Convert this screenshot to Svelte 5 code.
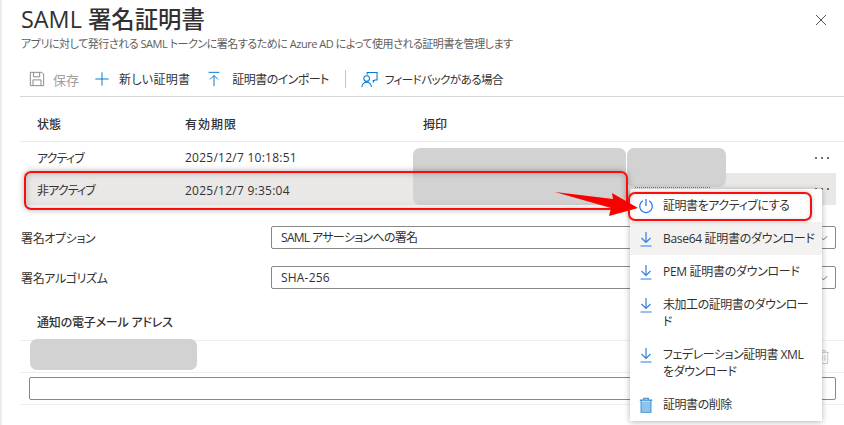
<script>
  const rows = [
    { state: 'アクティブ', date: '2025/12/7 10:18:51', selected: false },
    { state: '非アクティブ', date: '2025/12/7 9:35:04', selected: true }
  ];
  const fields = [
    { label: '署名オプション', value: 'SAML アサーションへの署名', cls: 'tight' },
    { label: '署名アルゴリズム', value: 'SHA-256', cls: '' }
  ];
  const downloads = [
    { text: 'Base64 証明書のダウンロード', cls: 'single hover' },
    { text: 'PEM 証明書のダウンロード', cls: 'single' },
    { text: '未加工の証明書のダウンロー\nド', cls: 'double' },
    { text: 'フェデレーション証明書 XML\nをダウンロード', cls: 'double' }
  ];
</script>

<div class="page">
  <header class="head">
    <h1>SAML 署名証明書</h1>
    <p>アプリに対して発行される SAML トークンに署名するために Azure AD によって使用される証明書を管理します</p>
    <svg class="close" viewBox="0 0 12 12"><path d="M1 1l10 10M11 1L1 11" /></svg>
  </header>

  <nav class="toolbar">
    <span class="tool disabled t-save">
      <svg viewBox="0 0 18 18" class="ic"><path d="M1.500 1.500h13l2 2v13h-15z M5 1.500v5h7v-5 M4.500 16.500v-6.500h9v6.500" /></svg>
      保存
    </span>
    <span class="tool t-new">
      <svg viewBox="0 0 18 18" class="ic blue"><path d="M9 1.500v15M1.500 9h15" /></svg>
      新しい証明書
    </span>
    <span class="tool t-import">
      <svg viewBox="0 0 18 18" class="ic blue"><path d="M3 1.500h12M9 17V5M4.500 9.500L9 5l4.500 4.500" /></svg>
      証明書のインポート
    </span>
    <span class="sep"></span>
    <span class="tool t-feedback">
      <svg viewBox="0 0 18 18" class="ic blue"><path d="M6.500 4V1.500H17v8h-2.500l-1.500 2v-2" /><circle cx="6" cy="8" r="3" /><path d="M1 17c0-3 2-5 5-5s5 2 5 5" /></svg>
      フィードバックがある場合
    </span>
  </nav>

  <section class="certs">
    <div class="row headrow">
      <span class="c1">状態</span><span class="c2">有効期限</span><span>拇印</span>
    </div>
    {#each rows as r}
      <div class="row" class:selected={r.selected}>
        <span class="c1">{r.state}</span><span class="c2">{r.date}</span>
        <svg class="more" viewBox="0 0 16 4"><circle cx="2" cy="2" r="1.100" /><circle cx="8" cy="2" r="1.100" /><circle cx="14" cy="2" r="1.100" /></svg>
      </div>
    {/each}
  </section>

  <section class="form">
    {#each fields as f}
      <div class="field">
        <span class="label">{f.label}</span>
        <div class="select">
          <span class={f.cls}>{f.value}</span>
          <svg viewBox="0 0 10 6" class="chev"><path d="M1 1l4 4 4-4" /></svg>
        </div>
      </div>
    {/each}
  </section>

  <section class="emails">
    <div class="emailhead">通知の電子メール アドレス</div>
    <div class="emailrow">
      <svg viewBox="0 0 14 16" class="trash"><path d="M1 3h12M5 3V1h4v2M2.500 3v12h9V3M5.500 6v6M8.500 6v6" /></svg>
    </div>
    <div class="emailinput"><div class="textbox"></div></div>
  </section>

  <div class="dots"></div>
  <div class="blur b1"></div>
  <div class="blur b2"></div>
  <div class="blur b3"></div>

  <div class="menu">
    <div class="item first">
      <svg viewBox="0 0 16 16" class="mi power"><path d="M8 1v7" /><path d="M4.800 2.800a6.300 6.300 0 1 0 6.400 0" /></svg>
      <span>証明書をアクティブにする</span>
    </div>
    {#each downloads as d}
      <div class="item {d.cls}">
        <svg viewBox="0 0 16 16" class="mi"><path d="M8 1v10M3.500 7L8 11.500 12.500 7M2.500 15h11" /></svg>
        <span>{d.text}</span>
      </div>
    {/each}
    <div class="item last">
      <svg viewBox="0 0 16 18" class="mi trashicon"><path class="fill" d="M3 5h10v11H3z" /><path d="M2.500 4v13h11V4M1 3.500h14M5.500 3V1.500h5V3" /></svg>
      <span>証明書の削除</span>
    </div>
  </div>

  <div class="mark markrow"></div>
  <div class="mark markitem"></div>
  <svg class="arrow" viewBox="555 190 85 28"><path d="M555 192L613 199 612 193 638 208 609 216 611 208z" /></svg>
</div>

<style>
  :global(body) {
    margin: 0;
    background: #fff;
  }
  .page {
    position: relative;
    width: 844px;
    height: 425px;
    overflow: hidden;
    box-sizing: border-box;
    border-left: 2px solid #ebebeb;
    font-family: "Open Sans", "Noto Sans CJK JP", sans-serif;
    font-feature-settings: "palt";
    font-size: 12px;
    color: #323130;
  }
  .head {
    position: relative;
    height: 52px;
    padding-left: 19px;
    box-sizing: border-box;
  }
  h1 {
    margin: 0;
    padding-top: 3px;
    font-size: 23.400px;
    line-height: 32px;
    font-weight: 500;
  }
  .head p {
    margin: 0;
    padding-top: 1px;
    font-size: 11px;
    line-height: 16px;
    color: #605e5c;
    white-space: nowrap;
    letter-spacing: -0.470px;
  }
  .close {
    position: absolute;
    right: 17px;
    top: 14px;
    width: 12px;
    height: 12px;
    fill: none;
    stroke: #505050;
    stroke-width: 1;
  }
  .toolbar {
    display: flex;
    align-items: center;
    margin: 0 0 0 18px;
    padding: 10px 0 0 9px;
    height: 34px;
    border-bottom: 1px solid #d6d6d6;
    gap: 16px;
    font-size: 12px;
  }
  .tool {
    display: flex;
    align-items: center;
    gap: 8px;
    white-space: nowrap;
  }
  .disabled {
    color: #a19f9d;
  }
  .t-save {
    font-size: 13px;
    margin-right: -1px;
  }
  .t-new {
    gap: 9px;
    letter-spacing: 0.300px;
  }
  .t-import {
    gap: 10px;
    letter-spacing: -0.550px;
  }
  .t-feedback {
    font-size: 11.500px;
    letter-spacing: -0.550px;
    margin-left: -1px;
    gap: 7px;
  }
  .t-feedback .ic {
    width: 17px;
    height: 17px;
  }
  .ic {
    width: 16px;
    height: 16px;
    fill: none;
    stroke: #8a8886;
    stroke-width: 1.100;
    flex: none;
  }
  .ic.blue {
    stroke: #0078d4;
  }
  .sep {
    width: 1px;
    height: 18px;
    background: #c8c6c4;
  }
  .certs {
    margin: 0 0 0 18px;
  }
  .row {
    display: flex;
    align-items: center;
    height: 31px;
    padding-left: 17px;
    margin-right: 8px;
    position: relative;
  }
  .headrow {
    height: 45px;
    padding-top: 10px;
    border-bottom: 1px solid #eaeaea;
    font-weight: 500;
    box-sizing: border-box;
    margin-right: 0;
  }
  .selected {
    background: #eae8e6;
    margin-left: 4px;
    padding-left: 13px;
    padding-top: 2px;
    box-sizing: border-box;
    height: 32px;
  }
  .c1 {
    width: 148px;
    flex: none;
  }
  .row:not(.headrow) .c1 {
    letter-spacing: -0.900px;
  }
  .c2 {
    width: 238px;
    flex: none;
    letter-spacing: 0.250px;
  }
  .headrow .c2 {
    letter-spacing: 1px;
  }
  .more {
    position: absolute;
    right: 6px;
    top: 14px;
    width: 16px;
    height: 4px;
    fill: #505050;
  }
  .form {
    margin: 21px 8px 0 19px;
  }
  .field {
    display: flex;
    align-items: center;
    height: 23px;
    margin-bottom: 17px;
  }
  .label {
    width: 250px;
    flex: none;
    letter-spacing: -0.350px;
  }
  .select {
    flex: 1;
    height: 23px;
    box-sizing: border-box;
    border: 1px solid #8a8886;
    border-radius: 2px;
    padding-left: 9px;
    line-height: 21px;
    position: relative;
    letter-spacing: 0.200px;
  }
  .tight {
    letter-spacing: -0.700px;
  }
  .chev {
    position: absolute;
    right: 7px;
    top: 8px;
    width: 9px;
    height: 6px;
    fill: none;
    stroke: #605e5c;
  }
  .emails {
    margin: 0 0 0 19px;
  }
  .emailhead {
    height: 35px;
    line-height: 22px;
    padding-left: 16px;
    padding-top: 6px;
    box-sizing: border-box;
    font-weight: 500;
    border-bottom: 1px solid #eeeeee;
    margin-top: 3px;
    letter-spacing: -0.200px;
  }
  .emailrow {
    height: 32px;
    box-sizing: border-box;
    border-bottom: 1px solid #eeeeee;
    position: relative;
  }
  .trash {
    position: absolute;
    right: 14px;
    top: 8px;
    width: 13px;
    height: 16px;
    fill: none;
    stroke: #c8c6c4;
  }
  .emailinput {
    height: 32px;
    box-sizing: border-box;
    border-bottom: 1px solid #eeeeee;
    padding: 4px 0 0 8px;
  }
  .textbox {
    height: 23px;
    box-sizing: border-box;
    border: 1px solid #8a8886;
    border-radius: 2px;
    margin-right: 8px;
  }
  .dots {
    position: absolute;
    left: 633px;
    top: 187px;
    width: 75px;
    border-top: 1px dotted #777;
  }
  .blur {
    position: absolute;
    background: #d2d2d2;
    border-radius: 7px;
  }
  .b1 {
    left: 411px;
    top: 148px;
    width: 213px;
    height: 57px;
  }
  .b2 {
    left: 625px;
    top: 148px;
    width: 99px;
    height: 39px;
  }
  .b3 {
    left: 28px;
    top: 339px;
    width: 167px;
    height: 31px;
  }
  .menu {
    position: absolute;
    left: 628px;
    top: 189px;
    width: 192px;
    background: #fff;
    box-shadow: 0 1px 6px rgba(0, 0, 0, 0.3);
    color: #323130;
    font-size: 12px;
  }
  .item {
    display: flex;
    align-items: center;
    padding: 0 4px 0 8px;
    gap: 9px;
    letter-spacing: -0.450px;
  }
  .single {
    letter-spacing: -0.300px;
  }
  .item span {
    flex: 1;
    line-height: 16.500px;
    padding-top: 1px;
    white-space: pre-line;
  }
  .first {
    height: 33px;
  }
  .single {
    height: 33px;
  }
  .hover {
    background: #f3f2f1;
  }
  .double {
    height: 50px;
  }
  .last {
    height: 33px;
  }
  .mi {
    width: 16px;
    height: 16px;
    fill: none;
    stroke: #2f7fe6;
    stroke-width: 1.200;
    flex: none;
  }
  .power {
    stroke: #1a73e8;
  }
  .trashicon {
    stroke: #2b88d8;
  }
  .double .mi {
    align-self: flex-start;
    margin-top: 9px;
  }
  .mi .fill {
    fill: #8cc4ea;
    stroke: none;
  }
  .mark {
    position: absolute;
    border: 2px solid #fb0d0d;
    border-radius: 7px;
    box-shadow: 0 0 6px rgba(0, 0, 0, 0.3), inset 0 0 6px rgba(0, 0, 0, 0.25);
    box-sizing: border-box;
  }
  .markrow {
    left: 22px;
    top: 171px;
    width: 604px;
    height: 39px;
  }
  .markitem {
    left: 626px;
    top: 192px;
    width: 184px;
    height: 29px;
    box-shadow: 0 0 4px rgba(0, 0, 0, 0.25), inset 0 0 4px rgba(0, 0, 0, 0.12);
  }
  .arrow {
    position: absolute;
    left: 553px;
    top: 190px;
    width: 85px;
    height: 28px;
    fill: #fb0000;
  }
</style>
